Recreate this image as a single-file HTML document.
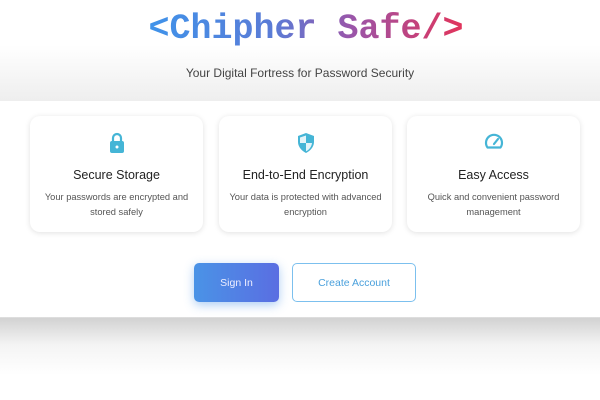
<!DOCTYPE html>
<html><head><style>
*{margin:0;padding:0;box-sizing:border-box}
body{width:600px;height:400px;overflow:hidden;font-family:"Liberation Sans",sans-serif;background:linear-gradient(#fff 0,#fff 316px,#d2d2d2 318px,#f4f4f4 345px,#fff 375px);position:relative}
.top{position:absolute;left:0;top:0;width:600px;height:101px;background:linear-gradient(#fff 45px,#eeeeee 101px)}
h1{position:absolute;top:9px;left:6px;width:600px;text-align:center;font-family:"Liberation Mono",monospace;font-weight:bold;font-size:35px}
h1 span{background:linear-gradient(90deg,#3f93ea 0%,#5b7bd6 40%,#9b55a8 65%,#e2335a 100%);-webkit-background-clip:text;background-clip:text;color:transparent}
.sub{position:absolute;top:66px;width:600px;text-align:center;font-size:12px;color:#444}
.band{position:absolute;left:0;top:101px;width:600px;height:216px;background:#fff}
.card{position:absolute;top:116px;width:173px;height:116px;border-radius:10px;background:#fff;box-shadow:0 1px 6px rgba(0,0,0,.12);text-align:center}
.card svg{position:absolute;top:16px;left:50%;transform:translateX(-50%)}
.card h3{position:absolute;top:52px;width:100%;font-weight:normal;font-size:12.5px;color:#222}
.card p{position:absolute;top:74px;left:4px;right:4px;font-size:9.3px;line-height:15px;color:#555}
.btn{position:absolute;top:263px;height:39px;border-radius:5px;font-size:10.5px;line-height:40px;text-align:center}
.si{left:194px;width:85px;background:linear-gradient(90deg,#4a93e6,#5a6ee2);color:#eef;box-shadow:0 3px 10px rgba(74,147,230,.45)}
.ca{left:292px;width:124px;border:1px solid #7cc0ee;color:#4aa0dc;line-height:38px}
</style></head><body>
<div class="top"></div>
<h1><span>&lt;Chipher Safe/&gt;</span></h1>
<div class="sub">Your Digital Fortress for Password Security</div>
<div class="band"></div>
<div class="card" style="left:30px">
<svg width="16" height="22" viewBox="0 0 16 22"><path d="M4 10V6a4 4 0 0 1 8 0v4" fill="none" stroke="#45b5d6" stroke-width="2.2"/><rect x="1" y="9" width="14" height="12" rx="2" fill="#45b5d6"/><circle cx="8" cy="15" r="1.5" fill="#fff"/></svg>
<h3>Secure Storage</h3><p>Your passwords are encrypted and stored safely</p></div>
<div class="card" style="left:219px">
<svg width="18" height="22" viewBox="0 0 18 22"><path d="M9 1L1 4v6c0 5 4 9 8 11 4-2 8-6 8-11V4z" fill="#45b5d6"/><path d="M9 3.5v7.5H3V5.5zM9 11h6c-.5 4-3 7-6 8.3z" fill="#fff" opacity=".85"/></svg>
<h3>End-to-End Encryption</h3><p>Your data is protected with advanced encryption</p></div>
<div class="card" style="left:407px">
<svg width="20" height="18" viewBox="0 0 20 18"><path d="M3.5 15.5A8 8 0 1 1 16.5 15.5Z" fill="none" stroke="#45b5d6" stroke-width="2.2" stroke-linejoin="round"/><path d="M10 12l4-5" stroke="#45b5d6" stroke-width="2.2" stroke-linecap="round"/></svg>
<h3>Easy Access</h3><p>Quick and convenient password management</p></div>
<div class="btn si">Sign In</div>
<div class="btn ca">Create Account</div>
</body></html>
